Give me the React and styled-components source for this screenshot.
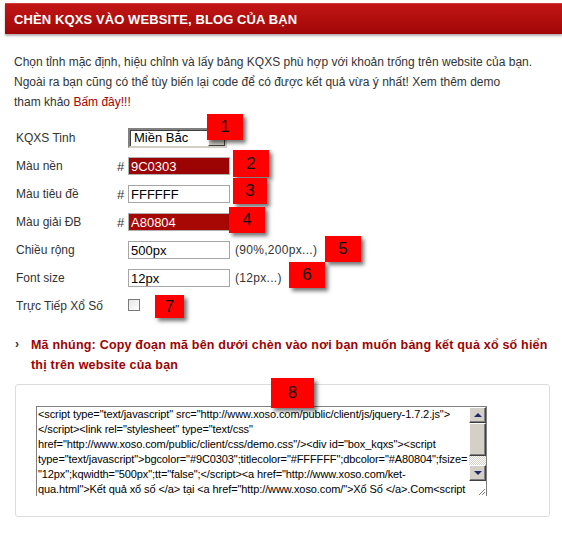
import React from "react";
import styled, { createGlobalStyle } from "styled-components";

const GlobalStyle = createGlobalStyle`
  body {
    margin: 0;
    background: #ffffff;
    font-family: "Liberation Sans", Arial, sans-serif;
    font-size: 12px;
    color: #333333;
  }
`;

const EMBED_CODE = [
  '<script type="text/javascript" src="http://www.xoso.com/public/client/js/jquery-1.7.2.js">',
  '</script><link rel="stylesheet" type="text/css"',
  'href="http://www.xoso.com/public/client/css/demo.css"/><div id="box_kqxs"><script',
  'type="text/javascript">bgcolor="#9C0303";titlecolor="#FFFFFF";dbcolor="#A80804";fsize=',
  '"12px";kqwidth="500px";tt="false";</script><a href="http://www.xoso.com/ket-',
  'qua.html">Kết quả xổ số </a> tại <a href="http://www.xoso.com/">Xổ Số </a>.Com<script',
  'type="text/javascript" src="http://www.xoso.com/getkqxs-xo-so-mien-bac.js"></script></div>',
].join("\n");

const App = () => {
  return (
    <Page>
      <GlobalStyle />
      <Header>
        <Title>CHÈN KQXS VÀO WEBSITE, BLOG CỦA BẠN</Title>
      </Header>

      <Intro>
        Chọn tỉnh mặc định, hiệu chỉnh và lấy bảng KQXS phù hợp với khoản trống trên website của bạn.
        <br />
        Ngoài ra bạn cũng có thể tùy biến lại code để có được kết quả vừa ý nhất! Xem thêm demo
        <br />
        tham khảo <DemoLink href="#">Bấm đây!!!</DemoLink>
      </Intro>

      <Form>
        <Row>
          <Label>KQXS Tinh</Label>
          <Hash />
          <Select>
            <SelectText>Miền Bắc</SelectText>
            <SelectButton />
          </Select>
          <Badge $left={207} $top={-10}>1</Badge>
        </Row>
        <Row>
          <Label>Màu nền</Label>
          <Hash>#</Hash>
          <Input readOnly value="9C0303" $bg="#9c0303" $color="#ffffff" />
          <Badge $left={233} $top={-2} $h={27}>2</Badge>
        </Row>
        <Row>
          <Label>Màu tiêu đề</Label>
          <Hash>#</Hash>
          <Input readOnly value="FFFFFF" />
          <Badge $left={233} $top={-2} $w={34}>3</Badge>
        </Row>
        <Row>
          <Label>Màu giải ĐB</Label>
          <Hash>#</Hash>
          <Input readOnly value="A80804" $bg="#a80804" $color="#ffffff" />
          <Badge $left={229} $top={-1}>4</Badge>
        </Row>
        <Row>
          <Label>Chiều rộng</Label>
          <Hash />
          <Input readOnly value="500px" />
          <Hint>(90%,200px...)</Hint>
          <Badge $left={325} $top={0}>5</Badge>
        </Row>
        <Row>
          <Label>Font size</Label>
          <Hash />
          <Input readOnly value="12px" />
          <Hint>(12px...)</Hint>
          <Badge $left={289} $top={-2}>6</Badge>
        </Row>
        <Row>
          <Label>Trực Tiếp Xổ Số</Label>
          <Hash />
          <Checkbox type="checkbox" />
          <Badge $left={155} $top={3} $w={29} $h={23}>7</Badge>
        </Row>
      </Form>

      <Section>
        <Bullet>›</Bullet>
        <SectionTitle>
          Mã nhúng: Copy đoạn mã bên dưới chèn vào nơi bạn muốn bảng kết quả xổ số hiển
          <br />
          thị trên website của bạn
        </SectionTitle>
      </Section>

      <CodeBox>
        <CodeFrame>
          <CodeArea readOnly value={EMBED_CODE} />
          <ScrollBar>
            <ScrollButton>
              <Arrow />
            </ScrollButton>
            <Thumb />
            <Track />
            <ScrollButton>
              <Arrow $down />
            </ScrollButton>
            <Grip>
              <svg width="10" height="10" viewBox="0 0 10 10">
                <path d="M9 3 L3 9 M9 6 L6 9" stroke="#808080" strokeWidth="1" />
                <path d="M9 4 L4 9 M9 7 L7 9" stroke="#ffffff" strokeWidth="1" />
              </svg>
            </Grip>
          </ScrollBar>
        </CodeFrame>
        <Badge $left={255} $top={-7} $w={43} $h={30}>8</Badge>
      </CodeBox>
    </Page>
  );
};

const Page = styled.div`
  width: 562px;
  padding-top: 3px;
`;

const Header = styled.div`
  margin-left: 5px;
  height: 30px;
  display: flex;
  align-items: center;
  padding-left: 9px;
  background: linear-gradient(#c21616, #a00606);
  border-top: 1px solid #d23a3a;
  box-shadow: 0 2px 2px rgba(0, 0, 0, 0.3);
`;

const Title = styled.h1`
  margin: 0;
  font-size: 13px;
  font-weight: bold;
  color: #ffffff;
  letter-spacing: 0.1px;
`;

const Intro = styled.p`
  margin: 18px 0 0 14px;
  line-height: 20px;
  color: #333333;
  white-space: nowrap;
`;

const DemoLink = styled.a`
  color: #a50000;
  text-decoration: none;
`;

const Form = styled.div`
  margin-top: 12px;
  display: flex;
  flex-direction: column;
`;

const Row = styled.div`
  position: relative;
  height: 28px;
  display: flex;
  align-items: center;
  padding-left: 16px;
`;

const Label = styled.span`
  width: 101px;
  color: #333333;
`;

const Hash = styled.span`
  width: 11px;
  font-size: 13px;
  color: #333333;
`;

const Input = styled.input`
  box-sizing: border-box;
  width: 102px;
  height: 18px;
  margin: 0;
  padding: 0 2px;
  border: 1px solid ${(p) => (p.$bg ? "#b0b0b0" : "#a5a5a5")};
  background: ${(p) => p.$bg || "#ffffff"};
  color: ${(p) => p.$color || "#000000"};
  font-family: "Liberation Sans", Arial, sans-serif;
  font-size: 13px;
  outline: none;
`;

const Select = styled.div`
  box-sizing: border-box;
  width: 99px;
  height: 20px;
  display: flex;
  align-items: stretch;
  border: 2px solid;
  border-color: #808080 #d4d0c8 #d4d0c8 #808080;
  box-shadow: inset 1px 1px #404040;
  background: #ffffff;
`;

const SelectText = styled.span`
  flex: 1;
  padding-left: 4px;
  font-size: 13px;
  line-height: 16px;
  color: #000000;
`;

const SelectButton = styled.span`
  width: 15px;
  background: #d4d0c8;
  border: 1px solid;
  border-color: #ffffff #404040 #404040 #ffffff;
`;

const Hint = styled.span`
  margin-left: 5px;
  color: #333333;
  letter-spacing: 0.3px;
`;

const Checkbox = styled.input`
  appearance: none;
  margin: 0 0 2px 0;
  width: 12px;
  height: 12px;
  border: 1px solid #7a7a7a;
  background: linear-gradient(135deg, #e6e6e6, #ffffff);
`;

const Badge = styled.div`
  position: absolute;
  left: ${(p) => p.$left}px;
  top: ${(p) => p.$top}px;
  width: ${(p) => p.$w || 36}px;
  height: ${(p) => p.$h || 26}px;
  background: #ff0000;
  color: #111111;
  font-size: 17px;
  line-height: ${(p) => p.$h || 26}px;
  text-align: center;
  box-shadow: 3px 3px 4px rgba(0, 0, 0, 0.55);
`;

const Section = styled.div`
  margin-top: 15px;
  display: flex;
  align-items: flex-start;
  padding-left: 15px;
`;

const Bullet = styled.span`
  width: 16px;
  font-size: 12px;
  font-weight: bold;
  line-height: 19px;
  color: #333333;
`;

const SectionTitle = styled.h2`
  margin: 0;
  font-size: 12.5px;
  font-weight: bold;
  line-height: 20px;
  letter-spacing: 0.2px;
  color: #9c0303;
  white-space: nowrap;
`;

const CodeBox = styled.div`
  position: relative;
  box-sizing: border-box;
  width: 535px;
  margin: 9px 0 0 15px;
  padding: 21px 0 20px 20px;
  border: 1px solid #dddddd;
  border-radius: 3px;
`;

const CodeFrame = styled.div`
  width: 451px;
  height: 90px;
  display: flex;
  border: 1px solid #7f7f7f;
  border-bottom: none;
  box-sizing: border-box;
  overflow: hidden;
`;

const CodeArea = styled.textarea`
  flex: 1;
  margin: 0;
  padding: 0 1px;
  border: none;
  resize: none;
  overflow: hidden;
  white-space: pre;
  font-family: "Liberation Sans", Arial, sans-serif;
  font-size: 11px;
  line-height: 15px;
  letter-spacing: -0.1px;
  color: #000000;
  background: #ffffff;
  outline: none;
`;

const ScrollBar = styled.div`
  width: 17px;
  display: flex;
  flex-direction: column;
`;

const ScrollButton = styled.div`
  box-sizing: border-box;
  height: 16px;
  display: flex;
  align-items: center;
  justify-content: center;
  background: #d4d0c8;
  border: 1px solid;
  border-color: #ffffff #404040 #404040 #ffffff;
  box-shadow: inset -1px -1px #808080;
`;

const Arrow = styled.span`
  width: 0;
  height: 0;
  border-left: 4px solid transparent;
  border-right: 4px solid transparent;
  ${(p) =>
    p.$down
      ? "border-top: 4px solid #1a2a6c;"
      : "border-bottom: 4px solid #1a2a6c;"}
`;

const Thumb = styled.div`
  box-sizing: border-box;
  height: 33px;
  background: #d4d0c8;
  border: 1px solid;
  border-color: #ffffff #404040 #404040 #ffffff;
  box-shadow: inset -1px -1px #808080;
`;

const Track = styled.div`
  height: 9px;
  background: repeating-conic-gradient(#ffffff 0 25%, #d4d0c8 0 50%) 0 0 / 2px 2px;
`;

const Grip = styled.div`
  flex: 1;
  display: flex;
  align-items: flex-end;
  justify-content: flex-end;
  background: #ffffff;
`;

export default App;
